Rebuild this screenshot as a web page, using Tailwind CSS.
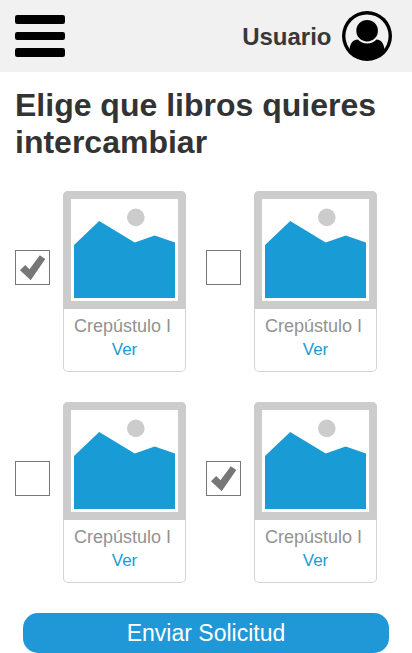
<!DOCTYPE html>
<html lang="es">
<head>
<meta charset="utf-8">
<meta name="viewport" content="width=device-width, initial-scale=1">
<title>Elige que libros quieres intercambiar</title>
<script src="https://cdn.jsdelivr.net/npm/@tailwindcss/browser@4"></script>
</head>
<body class="h-[653px] w-[412px] overflow-hidden bg-white font-['Liberation_Sans',Arial,sans-serif] text-[#333]">
<svg class="hidden">
  <symbol id="picture" viewBox="0 0 123 118">
    <path fill="#ccc" d="M0 0h123v118H0z"/>
    <path fill="#fff" d="M8 8h107v102H8z"/>
    <circle cx="72.8" cy="26.4" r="8.8" fill="#ccc"/>
    <path fill="#199bd5" d="M11 54 36.2 30 71.7 51.6 91.7 44.6 112 51.6V107H11z"/>
  </symbol>
  <symbol id="check" viewBox="0 0 33 33">
    <path fill="#777" d="M4 19.2 9.2 14 13.5 18.3 23.8 4.3 29.3 8.1 14.7 29.3z"/>
  </symbol>
</svg>
<header class="flex h-[72px] items-center justify-between bg-[#f1f1f1] pr-5 pl-[15px]">
  <button aria-label="Menú"><svg class="block" width="50" height="42" viewBox="0 0 50 42"><rect width="50" height="9" rx="2.2"/><rect y="17" width="50" height="8" rx="2.2"/><rect y="33" width="50" height="9" rx="2.2"/></svg></button>
  <div class="flex items-center gap-[10.5px]">
    <span class="pt-[2px] text-2xl leading-[28px] font-bold text-[#383838]">Usuario</span>
    <svg width="50" height="50" viewBox="0 0 50 50">
      <circle cx="25" cy="25" r="25"/>
      <circle cx="25" cy="25" r="21.6" fill="#f1f1f1"/>
      <path d="M7.6 38C8.3 32 11 29 15.8 28.6A13 13 0 0 0 34.5 28.6C39 29 41.7 32 42.4 38L39 44 25 49 11 44z"/>
      <circle cx="25.1" cy="19.7" r="10.8"/>
    </svg>
  </div>
</header>
<main>
  <h1 class="pt-[15px] pl-[15px] text-[32px] leading-[37px] font-bold">Elige que libros quieres<br>intercambiar</h1>
  <div class="mt-[30px] grid grid-cols-[171px_171px] gap-x-5 gap-y-[30px] pl-[15px]">
    <div class="flex gap-[13px]">
      <span class="mt-[59px] size-[35px] shrink-0 border border-[#777]"><svg class="size-[33px]"><use href="#check"/></svg></span>
      <article class="h-[181px] w-[123px] overflow-hidden rounded-[5px] bg-[#d3d3d3] p-px pt-0 text-center">
        <svg class="-mx-px h-[118px] w-[123px]"><use href="#picture"/></svg>
        <div class="h-[62px] rounded-b-[4px] bg-white pt-[6px]"><p class="pr-[4px] text-lg leading-[23px] whitespace-nowrap text-[#929292]">Crepústulo I</p><a class="block text-[17px] leading-[23px] text-[#199bd5]">Ver</a></div>
      </article>
    </div>
    <div class="flex gap-[13px]">
      <span class="mt-[59px] size-[35px] shrink-0 border border-[#777]"></span>
      <article class="h-[181px] w-[123px] overflow-hidden rounded-[5px] bg-[#d3d3d3] p-px pt-0 text-center">
        <svg class="-mx-px h-[118px] w-[123px]"><use href="#picture"/></svg>
        <div class="h-[62px] rounded-b-[4px] bg-white pt-[6px]"><p class="pr-[4px] text-lg leading-[23px] whitespace-nowrap text-[#929292]">Crepústulo I</p><a class="block text-[17px] leading-[23px] text-[#199bd5]">Ver</a></div>
      </article>
    </div>
    <div class="flex gap-[13px]">
      <span class="mt-[59px] size-[35px] shrink-0 border border-[#777]"></span>
      <article class="h-[181px] w-[123px] overflow-hidden rounded-[5px] bg-[#d3d3d3] p-px pt-0 text-center">
        <svg class="-mx-px h-[118px] w-[123px]"><use href="#picture"/></svg>
        <div class="h-[62px] rounded-b-[4px] bg-white pt-[6px]"><p class="pr-[4px] text-lg leading-[23px] whitespace-nowrap text-[#929292]">Crepústulo I</p><a class="block text-[17px] leading-[23px] text-[#199bd5]">Ver</a></div>
      </article>
    </div>
    <div class="flex gap-[13px]">
      <span class="mt-[59px] size-[35px] shrink-0 border border-[#777]"><svg class="size-[33px]"><use href="#check"/></svg></span>
      <article class="h-[181px] w-[123px] overflow-hidden rounded-[5px] bg-[#d3d3d3] p-px pt-0 text-center">
        <svg class="-mx-px h-[118px] w-[123px]"><use href="#picture"/></svg>
        <div class="h-[62px] rounded-b-[4px] bg-white pt-[6px]"><p class="pr-[4px] text-lg leading-[23px] whitespace-nowrap text-[#929292]">Crepústulo I</p><a class="block text-[17px] leading-[23px] text-[#199bd5]">Ver</a></div>
      </article>
    </div>
  </div>
  <button class="mt-[30px] ml-[23px] block h-10 w-[366px] rounded-[15px] bg-[#2098d8] text-[23px] leading-10 text-white">Enviar Solicitud</button>
</main>
</body>
</html>
